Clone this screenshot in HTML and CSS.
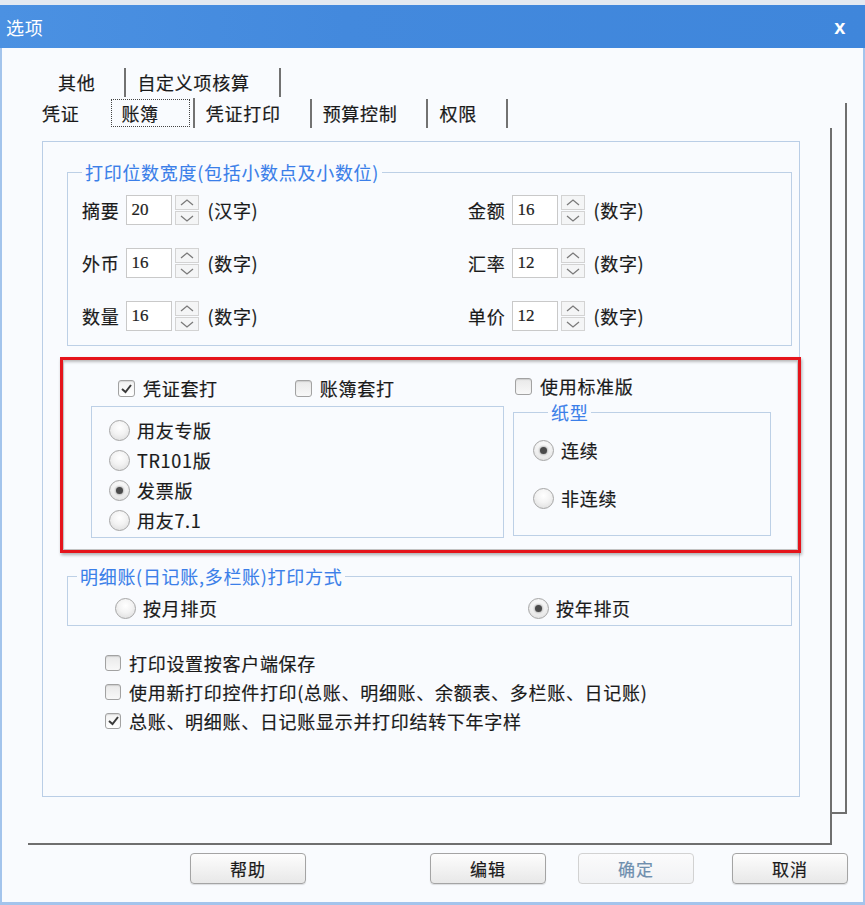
FILE: index.html
```html
<!DOCTYPE html>
<html lang="zh-CN">
<head>
<meta charset="utf-8">
<title>选项</title>
<link rel="stylesheet" href="styles.css">
</head>
<body>
<div class="window">
  <div class="titlebar"><span class="title">选项</span><span class="close">x</span></div>
  <div class="client">
    <div class="tabrow row1">
      <span class="tab first">其他</span>
      <span class="tab">自定义项核算</span>
    </div>
    <div class="tabrow row2">
      <span class="tab first nosep">凭证</span>
      <span class="tab sel"><span class="focus">账簿</span></span>
      <span class="tab">凭证打印</span>
      <span class="tab">预算控制</span>
      <span class="tab">权限</span>
    </div>
    <div class="pages">
      <div class="page">
        <div class="frame">
          <fieldset class="grp g-width">
            <legend>打印位数宽度(包括小数点及小数位)</legend>
            <div class="fields">
              <div class="field"><span class="lbl">摘要</span><span class="num">20</span><span class="spin"><span class="half"><svg viewBox="0 0 24 14" width="24" height="14"><polyline points="6,10 12,5 18,10"/></svg></span><span class="half"><svg viewBox="0 0 24 14" width="24" height="14"><polyline points="6,5 12,10 18,5"/></svg></span></span><span class="unit">(汉字)</span></div>
              <div class="field"><span class="lbl">金额</span><span class="num">16</span><span class="spin"><span class="half"><svg viewBox="0 0 24 14" width="24" height="14"><polyline points="6,10 12,5 18,10"/></svg></span><span class="half"><svg viewBox="0 0 24 14" width="24" height="14"><polyline points="6,5 12,10 18,5"/></svg></span></span><span class="unit">(数字)</span></div>
              <div class="field"><span class="lbl">外币</span><span class="num">16</span><span class="spin"><span class="half"><svg viewBox="0 0 24 14" width="24" height="14"><polyline points="6,10 12,5 18,10"/></svg></span><span class="half"><svg viewBox="0 0 24 14" width="24" height="14"><polyline points="6,5 12,10 18,5"/></svg></span></span><span class="unit">(数字)</span></div>
              <div class="field"><span class="lbl">汇率</span><span class="num">12</span><span class="spin"><span class="half"><svg viewBox="0 0 24 14" width="24" height="14"><polyline points="6,10 12,5 18,10"/></svg></span><span class="half"><svg viewBox="0 0 24 14" width="24" height="14"><polyline points="6,5 12,10 18,5"/></svg></span></span><span class="unit">(数字)</span></div>
              <div class="field"><span class="lbl">数量</span><span class="num">16</span><span class="spin"><span class="half"><svg viewBox="0 0 24 14" width="24" height="14"><polyline points="6,10 12,5 18,10"/></svg></span><span class="half"><svg viewBox="0 0 24 14" width="24" height="14"><polyline points="6,5 12,10 18,5"/></svg></span></span><span class="unit">(数字)</span></div>
              <div class="field"><span class="lbl">单价</span><span class="num">12</span><span class="spin"><span class="half"><svg viewBox="0 0 24 14" width="24" height="14"><polyline points="6,10 12,5 18,10"/></svg></span><span class="half"><svg viewBox="0 0 24 14" width="24" height="14"><polyline points="6,5 12,10 18,5"/></svg></span></span><span class="unit">(数字)</span></div>
            </div>
          </fieldset>

          <div class="redbox">
            <div class="col-left">
              <div class="checkrow">
                <span class="chk c-voucher"><span class="cb on"><svg viewBox="0 0 17 17" width="17" height="17"><polyline points="4,9 7.5,12 13,5"/></svg></span><span>凭证套打</span></span>
                <span class="chk c-book"><span class="cb"></span><span>账簿套打</span></span>
              </div>
              <div class="box">
                <div class="ropt"><span class="rb"></span><span>用友专版</span></div>
                <div class="ropt"><span class="rb"></span><span>TR101版</span></div>
                <div class="ropt"><span class="rb on"></span><span>发票版</span></div>
                <div class="ropt"><span class="rb"></span><span>用友7.1</span></div>
              </div>
            </div>
            <div class="col-right">
              <div class="checkrow std-row">
                <span class="chk c-std"><span class="cb"></span><span>使用标准版</span></span>
              </div>
              <fieldset class="grp g-paper">
                <legend>纸型</legend>
                <div class="ropt tall"><span class="rb on"></span><span>连续</span></div>
                <div class="ropt tall"><span class="rb"></span><span>非连续</span></div>
              </fieldset>
            </div>
          </div>

          <fieldset class="grp g-mode">
            <legend>明细账(日记账,多栏账)打印方式</legend>
            <div class="modes">
              <div class="ropt tall"><span class="rb"></span><span>按月排页</span></div>
              <div class="ropt tall"><span class="rb on"></span><span>按年排页</span></div>
            </div>
          </fieldset>

          <div class="checklist">
            <div class="chk row"><span class="cb"></span><span>打印设置按客户端保存</span></div>
            <div class="chk row"><span class="cb"></span><span>使用新打印控件打印(总账、明细账、余额表、多栏账、日记账)</span></div>
            <div class="chk row"><span class="cb on"><svg viewBox="0 0 17 17" width="17" height="17"><polyline points="4,9 7.5,12 13,5"/></svg></span><span>总账、明细账、日记账显示并打印结转下年字样</span></div>
          </div>
        </div>
      </div>
      <div class="backstrip"></div>
    </div>
    <div class="btnrow">
      <span class="btn b-help">帮助</span>
      <span class="btn b-edit">编辑</span>
      <span class="btn b-ok disabled">确定</span>
      <span class="btn b-cancel">取消</span>
    </div>
  </div>
</div>
</body>
</html>
```

FILE: styles.css
```css
* { box-sizing: border-box; }

body {
  margin: 0;
  font-family: "Noto Sans CJK SC", "Noto Sans", sans-serif;
  font-size: 18px;
  letter-spacing: 0.7px;
  color: #1a1a1a;
  background: #e6ebf2;
  -webkit-text-stroke: 0.2px currentColor;
}

.window {
  width: 865px;
  height: 905px;
  display: flex;
  flex-direction: column;
  padding-top: 5px;
  background: #e3e9f1;
}

.titlebar {
  height: 43px;
  flex: none;
  display: flex;
  align-items: center;
  justify-content: space-between;
  padding: 0 19px 0 6px;
  background: linear-gradient(90deg, #4b91e2 0%, #4389dd 40%, #3f86db 100%);
  color: #fff;
  font-size: 18px;
  line-height: 1;
  -webkit-text-stroke: 0;
}

.close {
  font-family: "Liberation Sans", sans-serif;
  font-weight: bold;
  font-size: 20px;
}

.client {
  flex: 1;
  background: #f9fbfe;
  border-left: 2px solid #a3c4ec;
  border-right: 2px solid #a3c4ec;
  border-bottom: 3px solid #a3c4ec;
  padding: 18px 0 0 26px;
}

/* tabs */
.tabrow {
  display: flex;
  align-items: center;
}
.row1 { height: 32px; padding-left: 30px; }
.row2 { height: 30px; padding-left: 14px; }

.tab {
  display: flex;
  align-items: center;
  height: 29px;
  padding: 0 29px 0 11px;
  border-right: 2px solid #727272;
  line-height: 1;
}
.tab.first { padding-left: 0; }
.tab.nosep { border-right: none; padding-right: 32px; }
.tab.sel { padding: 0 3px 0 0; height: 30px; }
.focus {
  display: flex;
  align-items: center;
  height: 28px;
  padding: 0 30px 0 9px;
  border: 1px dotted #444;
}

/* pages */
.pages {
  display: flex;
  align-items: flex-start;
}
.page {
  width: 804px;
  height: 717px;
  flex: none;
  border-right: 2px solid #6f6f6f;
  border-bottom: 2px solid #6f6f6f;
  padding: 13px 0 0 14px;
  background: #f9fbfe;
}
.backstrip {
  width: 15px;
  height: 711px;
  flex: none;
  margin-top: -25px;
  border-right: 2px solid #6f6f6f;
  border-bottom: 2px solid #6f6f6f;
}

.frame {
  width: 758px;
  height: 656px;
  border: 1px solid #bacee6;
  display: flex;
  flex-direction: column;
  align-items: flex-start;
}

/* group boxes */
.grp {
  margin: 0;
  padding: 0;
  min-width: 0;
  border: 1px solid #bdd0e6;
}
.grp legend {
  padding: 0 3px;
  line-height: 22px;
  height: 22px;
  color: #3b7fe9;
  font-size: 18px;
  -webkit-text-stroke: 0.1px currentColor;
}

.g-width {
  width: 725px;
  margin: 19px 0 0 24px;
}
.g-width legend { margin-left: 14px; }

.fields {
  display: grid;
  grid-template-columns: 386px auto;
  row-gap: 23px;
  padding: 12px 0 14px 14px;
}
.field {
  display: flex;
  align-items: center;
  height: 30px;
}
.lbl { line-height: 1; }
.num {
  width: 46px;
  height: 30px;
  margin-left: 7px;
  background: #fff;
  border: 1px solid #c9c9c9;
  display: flex;
  align-items: center;
  padding-left: 4px;
  font-family: "Liberation Serif", serif;
  font-size: 17px;
  letter-spacing: 0;
  color: #222;
}
.spin {
  width: 24px;
  height: 30px;
  margin-left: 3px;
  display: flex;
  flex-direction: column;
  justify-content: space-between;
}
.half {
  height: 14.5px;
  border: 1px solid #d3d3d3;
  background: #f4f5f6;
  display: flex;
  align-items: center;
  justify-content: center;
  overflow: hidden;
}
.half svg { flex: none; }
.half polyline {
  fill: none;
  stroke: #7a7a7a;
  stroke-width: 1.3;
}
.unit {
  margin-left: 8px;
  line-height: 1;
}

/* red annotated box */
.redbox {
  width: 741px;
  height: 196px;
  margin: 11px 0 0 17px;
  border: 3px solid #e5141b;
  box-shadow: inset 0 0 0 1px #c2c2c2, inset 0 2px 3px rgba(0,0,0,0.25), 1px 2px 3px rgba(0,0,0,0.3);
  display: grid;
  grid-template-columns: 413px 258px;
  column-gap: 9px;
  padding: 18px 0 0 28px;
  align-items: start;
}
.checkrow {
  display: flex;
  align-items: center;
  height: 20px;
}
.std-row {
  margin-top: -2px;
}
.chk {
  display: flex;
  align-items: center;
  gap: 8px;
  line-height: 1;
}
.c-voucher { margin-left: 27px; }
.c-book { margin-left: 77px; }
.c-std { margin-left: 2px; }

.cb {
  width: 17px;
  height: 17px;
  flex: none;
  border: 1px solid #a2a2a2;
  border-radius: 3px;
  background: linear-gradient(#e9e9e9, #f8f8f8);
  box-shadow: inset 0 1px 1px rgba(0,0,0,0.12);
  display: flex;
  align-items: center;
  justify-content: center;
}
.cb.on { background: linear-gradient(#f3f3f3, #ffffff); }
.cb svg { margin: -1px; flex: none; }
.cb polyline {
  fill: none;
  stroke: #3a3a3a;
  stroke-width: 2;
}

.box {
  margin-top: 8px;
  height: 132px;
  border: 1px solid #bdd0e6;
  padding: 8px 0 0 17px;
}
.ropt {
  display: flex;
  align-items: center;
  gap: 7px;
  height: 30px;
  line-height: 1;
}
.ropt.tall { height: 28px; }

.rb {
  width: 21px;
  height: 21px;
  flex: none;
  border-radius: 50%;
  border: 1px solid #a6a6a6;
  background: radial-gradient(circle at 50% 35%, #ffffff 0%, #f3f3f3 45%, #d9d9d9 100%);
  display: flex;
  align-items: center;
  justify-content: center;
}
.rb.on::after {
  content: "";
  width: 7px;
  height: 7px;
  border-radius: 50%;
  background: #4a4a4a;
  box-shadow: 0 0 2px 1px rgba(120,120,120,0.5);
}

.g-paper {
  margin-top: 6px;
  height: 134px;
  padding: 14px 0 0 19px;
  display: flex;
  flex-direction: column;
  gap: 20px;
}
.g-paper legend {
  margin-left: 15px;
  line-height: 20px;
  height: 20px;
}

.g-mode {
  width: 725px;
  margin: 12px 0 0 24px;
}
.g-mode legend { margin-left: 9px; }
.modes {
  display: grid;
  grid-template-columns: 413px auto;
  padding: 7px 0 3px 47px;
}

.checklist {
  margin: 22px 0 0 62px;
}
.checklist .row {
  height: 29px;
}
.checklist .cb { width: 16px; height: 16px; }

/* buttons */
.btnrow {
  display: flex;
  margin-top: 8px;
}
.btn {
  width: 116px;
  height: 31px;
  display: flex;
  align-items: center;
  justify-content: center;
  border: 1px solid #a4a4a4;
  border-radius: 4px;
  background: linear-gradient(#fdfdfd, #e8e8e8);
  box-shadow: 0 1px 1px rgba(0,0,0,0.12);
  font-size: 17px;
  letter-spacing: 1px;
  line-height: 1;
}
.b-help { margin-left: 162px; }
.b-edit { margin-left: 124px; }
.b-ok { margin-left: 32px; }
.b-cancel { margin-left: 38px; }
.btn.disabled {
  color: #6f8fae;
  border-color: #d2d2d2;
  background: linear-gradient(#fbfbfc, #f1f2f4);
  box-shadow: none;
}
```
